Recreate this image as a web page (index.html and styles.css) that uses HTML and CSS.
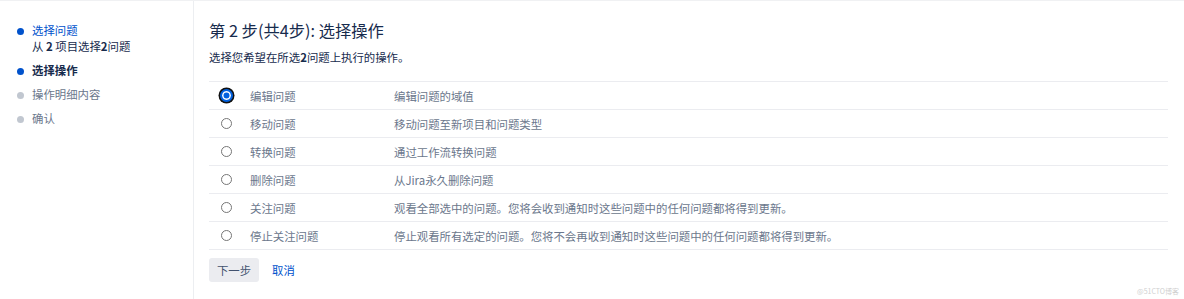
FILE: index.html
```html
<!DOCTYPE html>
<html lang="zh-CN">
<head>
<meta charset="utf-8">
<title>批量操作</title>
<link rel="stylesheet" href="styles.css">
</head>
<body>
<div class="page">
  <aside class="sidebar">
    <ul class="steps">
      <li class="step done">
        <span class="dot"></span>
        <div class="step-body">
          <a class="step-link" href="#">选择问题</a>
          <div class="step-sub">从 <b>2</b> 项目选择<b>2</b>问题</div>
        </div>
      </li>
      <li class="step current">
        <span class="dot"></span>
        <div class="step-body">选择操作</div>
      </li>
      <li class="step todo">
        <span class="dot"></span>
        <div class="step-body">操作明细内容</div>
      </li>
      <li class="step todo">
        <span class="dot"></span>
        <div class="step-body">确认</div>
      </li>
    </ul>
  </aside>
  <main class="main">
    <h1 class="title">第 2 步(共4步): 选择操作</h1>
    <p class="desc">选择您希望在所选<b>2</b>问题上执行的操作。</p>
    <div class="ops">
      <label class="op"><span class="radio checked"></span><span class="op-name">编辑问题</span><span class="op-desc">编辑问题的域值</span></label>
      <label class="op"><span class="radio"></span><span class="op-name">移动问题</span><span class="op-desc">移动问题至新项目和问题类型</span></label>
      <label class="op"><span class="radio"></span><span class="op-name">转换问题</span><span class="op-desc">通过工作流转换问题</span></label>
      <label class="op"><span class="radio"></span><span class="op-name">删除问题</span><span class="op-desc">从Jira永久删除问题</span></label>
      <label class="op"><span class="radio"></span><span class="op-name">关注问题</span><span class="op-desc">观看全部选中的问题。您将会收到通知时这些问题中的任何问题都将得到更新。</span></label>
      <label class="op"><span class="radio"></span><span class="op-name">停止关注问题</span><span class="op-desc">停止观看所有选定的问题。您将不会再收到通知时这些问题中的任何问题都将得到更新。</span></label>
    </div>
    <div class="actions">
      <button class="btn">下一步</button>
      <a class="cancel" href="#">取消</a>
    </div>
  </main>
</div>
<div class="watermark">@51CTO博客</div>
</body>
</html>
```
FILE: styles.css
```css
* { box-sizing: border-box; }
html, body { margin: 0; padding: 0; background: #fff; }
body {
  font-family: "Noto Sans CJK SC", "Noto Sans", sans-serif;
  font-size: 11.4px;
  color: #172b4d;
  height: 299px;
  overflow: hidden;
  position: relative;
}
.page {
  display: flex;
  border-top: 1px solid #f0f1f3;
  height: 299px;
}
.sidebar {
  width: 194px;
  flex: none;
  border-right: 1px solid #eceef1;
  padding-top: 21px;
}
.steps { list-style: none; margin: 0; padding: 0 0 0 17px; }
.step { display: flex; align-items: flex-start; margin-bottom: 8px; }
.dot {
  width: 7px; height: 7px; border-radius: 50%;
  margin-top: 6px; margin-right: 8px; flex: none;
  background: #c1c7d0;
}
.step.done .dot, .step.current .dot { background: #0052cc; }
.step-body { line-height: 16px; }
.step-link { color: #0052cc; text-decoration: none; }
.step-sub { color: #172b4d; }
.step-sub b { font-weight: 700; }
.step.current .step-body { font-weight: 700; color: #172b4d; }
.step.todo .step-body { color: #6b778c; }

.main { flex: 1; padding: 17px 16px 0 15px; }
.title {
  margin: 0;
  font-size: 16.3px;
  line-height: 24px;
  font-weight: 400;
  color: #172b4d;
}
.desc { margin: 6px 0 15px; line-height: 18px; color: #172b4d; }
.desc b { font-weight: 700; }
.ops { border-top: 1px solid #ebecf0; }
.op {
  display: flex;
  align-items: center;
  height: 28px;
  border-bottom: 1px solid #ebecf0;
}
.radio {
  width: 11px; height: 11px;
  border-radius: 50%;
  border: 1px solid #767676;
  margin-left: 12px;
  margin-right: 18px;
  flex: none;
  background: #fff;
}
.radio.checked {
  width: 13px; height: 13px;
  margin-left: 11px; margin-right: 17px;
  border: 2px solid #0060df;
  background: #fff;
  box-shadow: inset 0 0 0 1.5px #fff, inset 0 0 0 6px #0060df, 0 0 0 1.5px #101010;
}
.op-name { width: 144px; flex: none; color: #6b778c; }
.op-desc { color: #6b778c; }

.actions { display: flex; align-items: center; margin-top: 8px; }
.btn {
  font-family: inherit;
  font-size: 11.4px;
  color: #42526e;
  background: #ebecf0;
  border: none;
  border-radius: 3px;
  height: 24px;
  width: 50px;
  padding: 0;
  margin-right: 13px;
}
.cancel { color: #0052cc; text-decoration: none; }
.watermark {
  position: absolute;
  right: 5px;
  bottom: 3px;
  font-size: 7px;
  color: #d0d0d0;
}
```
